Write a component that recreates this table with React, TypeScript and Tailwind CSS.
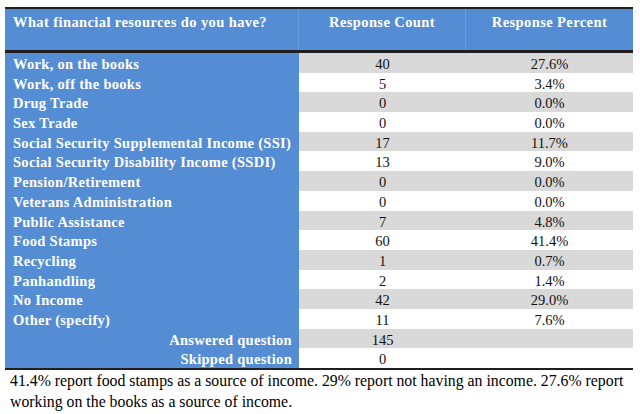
import React from "react";

type Row = { label: string; count: string; percent: string };

const rows: Row[] = [
  { label: "Work, on the books", count: "40", percent: "27.6%" },
  { label: "Work, off the books", count: "5", percent: "3.4%" },
  { label: "Drug Trade", count: "0", percent: "0.0%" },
  { label: "Sex Trade", count: "0", percent: "0.0%" },
  { label: "Social Security Supplemental Income (SSI)", count: "17", percent: "11.7%" },
  { label: "Social Security Disability Income (SSDI)", count: "13", percent: "9.0%" },
  { label: "Pension/Retirement", count: "0", percent: "0.0%" },
  { label: "Veterans Administration", count: "0", percent: "0.0%" },
  { label: "Public Assistance", count: "7", percent: "4.8%" },
  { label: "Food Stamps", count: "60", percent: "41.4%" },
  { label: "Recycling", count: "1", percent: "0.7%" },
  { label: "Panhandling", count: "2", percent: "1.4%" },
  { label: "No Income", count: "42", percent: "29.0%" },
  { label: "Other (specify)", count: "11", percent: "7.6%" },
  { label: "Answered question", count: "145", percent: "" },
  { label: "Skipped question", count: "0", percent: "" },
];

const serif = "font-['Liberation_Serif',serif]";

export default function App() {
  return (
    <div className={`w-[640px] h-[414px] bg-white pt-[7px] ${serif}`}>
      <div className="ml-[5px] w-[628px]">
        {/* header */}
        <div className="grid grid-cols-[294px_167px_167px] border-t-2 border-b-[3px] border-[#1f1f1f] bg-[#548dd4] h-[46px] text-white font-bold text-[14.5px] tracking-[0.4px] leading-[17px]">
          <div className="pl-[8px] pt-[5px] border-r border-[#6d9edc]">What financial resources do you have?</div>
          <div className="pt-[5px] text-center border-r border-[#6d9edc]">Response Count</div>
          <div className="pt-[5px] text-center">Response Percent</div>
        </div>

        {/* body */}
        {rows.map((r, i) => {
          const summary = i >= 14;
          return (
            <div
              key={r.label}
              className={`grid grid-cols-[294px_167px_167px] h-[19.7px] text-[14.5px] leading-[16.7px] ${
                i % 2 === 0 ? "bg-[#d9d9d9]" : "bg-white"
              }`}
            >
              <div
                className={`bg-[#548dd4] text-white font-bold tracking-[0.3px] whitespace-nowrap pt-[3px] ${
                  summary ? "text-right pr-[7px]" : "pl-[8px]"
                }`}
              >
                {r.label}
              </div>
              <div className="text-center text-[#111] pt-[3px]">{r.count}</div>
              <div className="text-center text-[#111] pt-[3px]">{r.percent}</div>
            </div>
          );
        })}
        <div className="h-[2px] bg-[#1f1f1f]" />
      </div>

      <p className="pl-[10px] pr-[4px] text-[15.8px] leading-[21px] text-black">
        41.4% report food stamps as a source of income. 29% report not having an income. 27.6% report
        working on the books as a source of income.
      </p>
    </div>
  );
}
